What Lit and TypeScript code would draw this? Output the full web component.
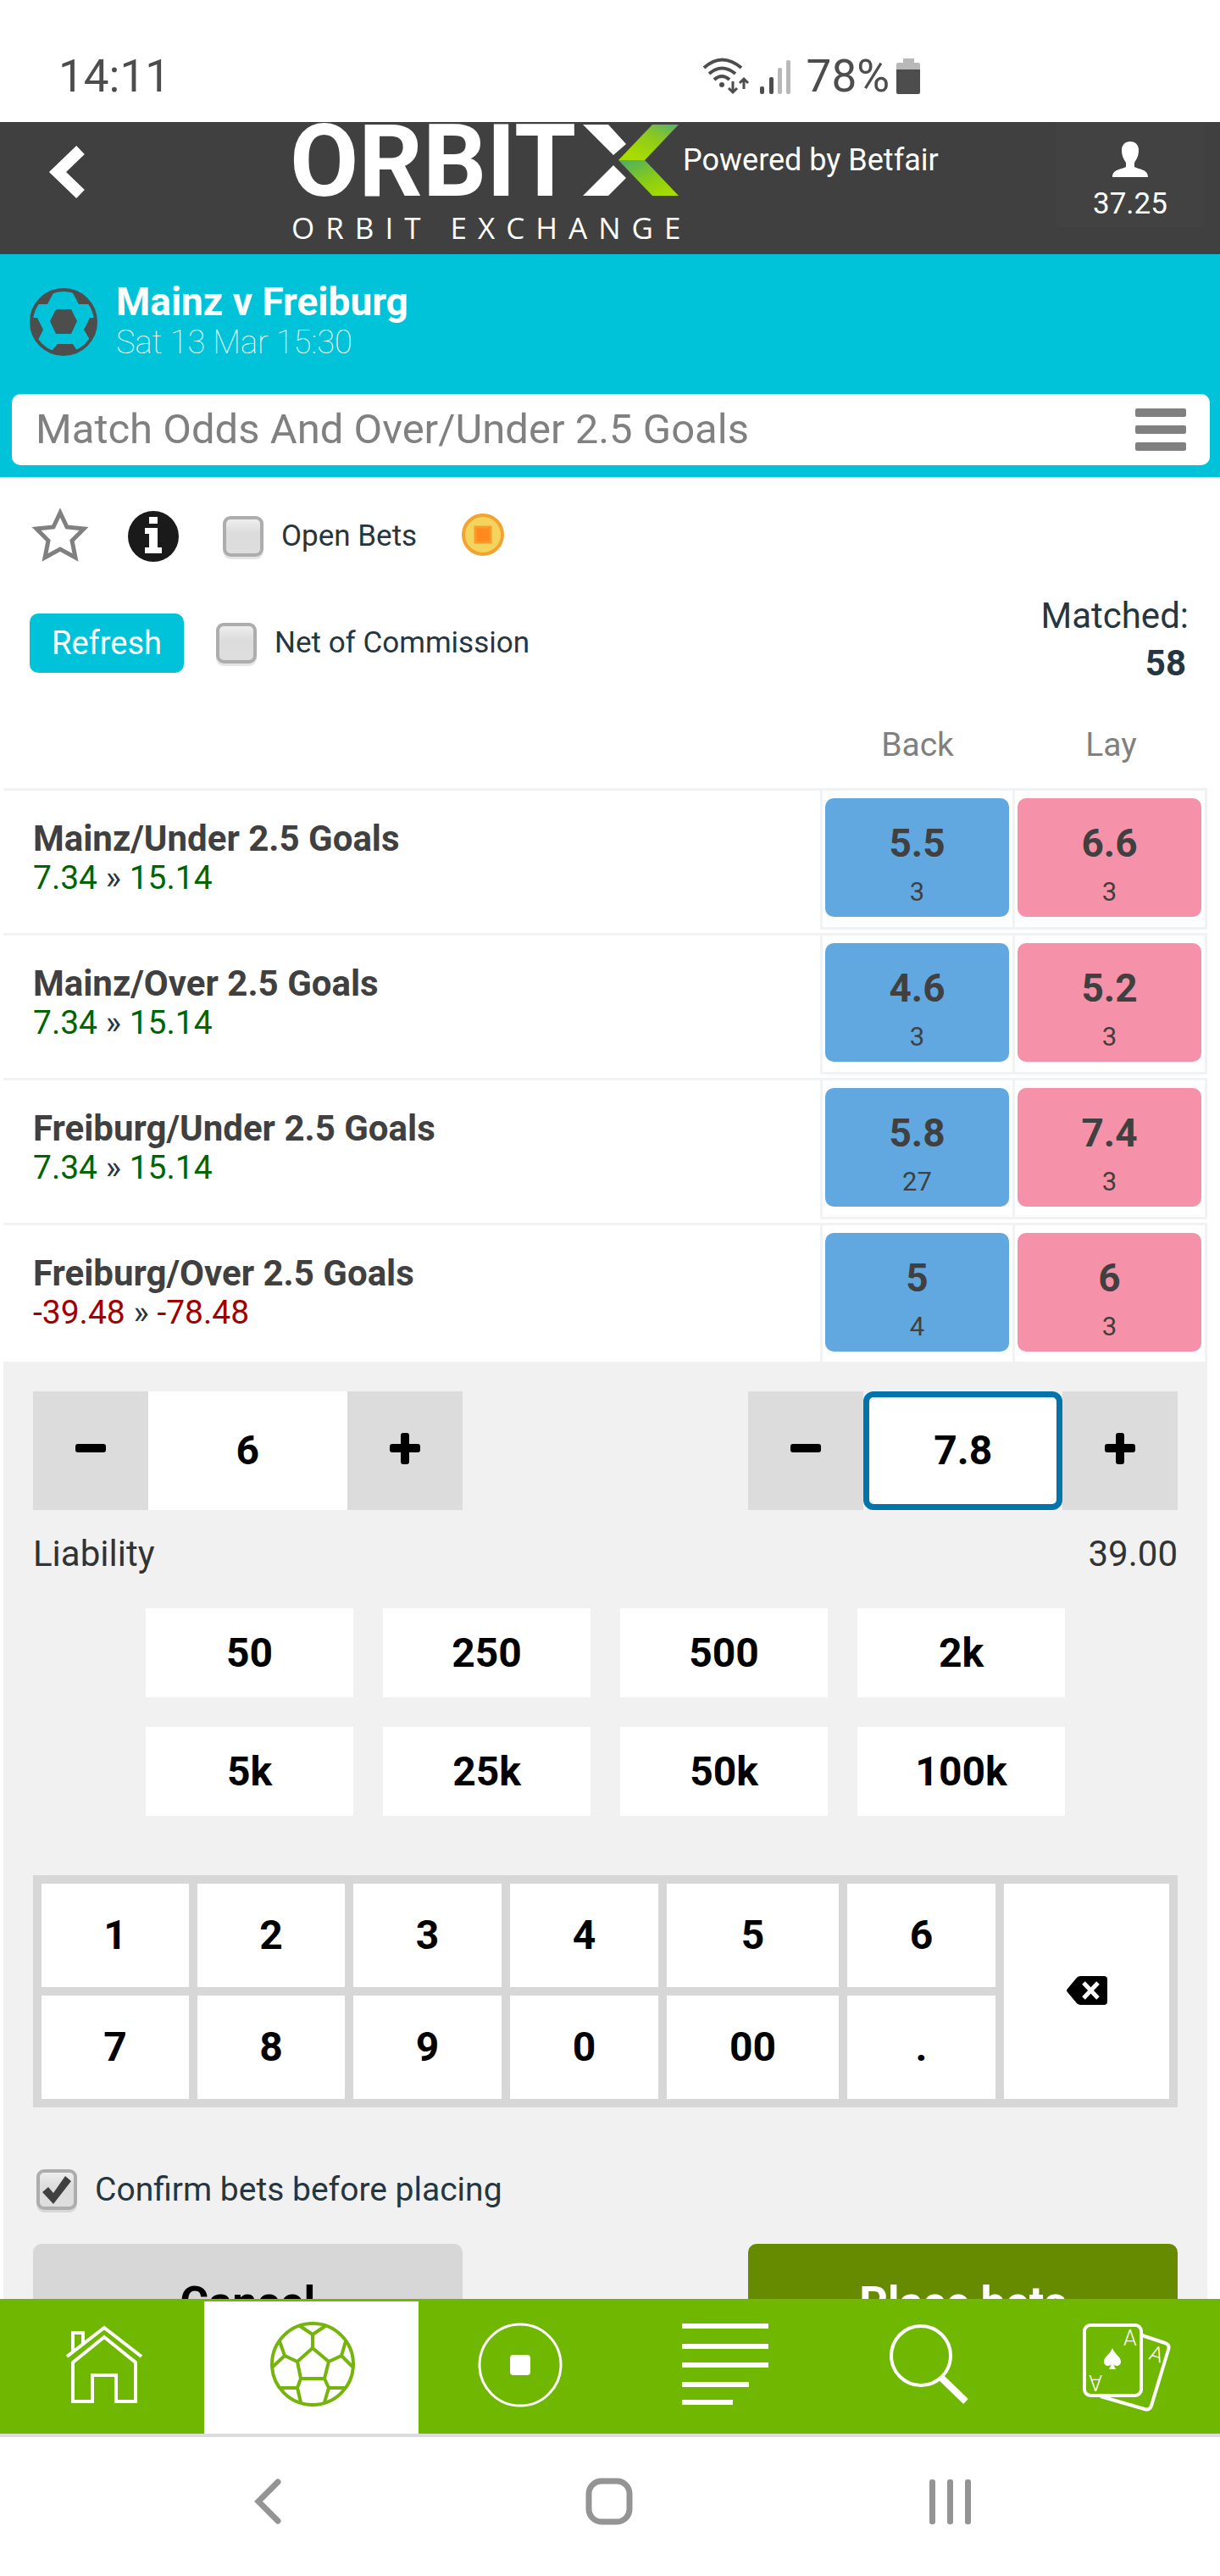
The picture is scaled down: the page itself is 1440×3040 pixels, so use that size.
import { LitElement, html, css, svg } from "lit";
import { customElement, state } from "lit/decorators.js";
import { classMap } from "lit/directives/class-map.js";

interface Runner {
  name: string;
  now: string;
  after: string;
  back: [string, string];
  lay: [string, string];
}

const RUNNERS: Runner[] = [
  { name: "Mainz/Under 2.5 Goals", now: "7.34", after: "15.14", back: ["5.5", "3"], lay: ["6.6", "3"] },
  { name: "Mainz/Over 2.5 Goals", now: "7.34", after: "15.14", back: ["4.6", "3"], lay: ["5.2", "3"] },
  { name: "Freiburg/Under 2.5 Goals", now: "7.34", after: "15.14", back: ["5.8", "27"], lay: ["7.4", "3"] },
  { name: "Freiburg/Over 2.5 Goals", now: "-39.48", after: "-78.48", back: ["5", "4"], lay: ["6", "3"] },
];

const STAKES = ["50", "250", "500", "2k", "5k", "25k", "50k", "100k"];
const KEYS_TOP = ["1", "2", "3", "4", "5", "6"];
const KEYS_BOTTOM = ["7", "8", "9", "0", "00", "."];

/* ---------- status bar ---------- */

@customElement("status-bar")
export class StatusBar extends LitElement {
  static styles = css`
    :host {
      display: flex;
      justify-content: space-between;
      align-items: flex-end;
      box-sizing: border-box;
      height: 144px;
      padding: 0 354px 24px 69px;
      background: #fff;
      color: #4d4d4d;
      font-size: 53px;
      line-height: 60px;
    }
    .icons {
      display: flex;
      align-items: center;
    }
    svg {
      display: block;
    }
    .signal {
      margin: 0 19px 0 10px;
    }
    .battery {
      margin-left: 8px;
    }
  `;

  render() {
    return html`
      <span>14:11</span>
      <div class="icons">
        <svg width="58" height="44" viewBox="0 0 58 44" fill="none" stroke="#4d4d4d" stroke-width="4">
          <path d="M2 12Q23 -7 46 12M8 19Q23 6 39 19M14 26Q23 18 32 26" />
          <circle cx="23" cy="32" r="3" fill="#4d4d4d" stroke="none" />
          <path d="M36 28V40M31 36l5 5 5-5M49 37V25M44 30l5-5 5 5" stroke-width="3" />
        </svg>
        <svg class="signal" width="36" height="44" viewBox="0 0 36 44">
          <g fill="#4d4d4d">
            <rect x="0" y="34" width="5" height="9" rx="2" />
            <rect x="11" y="23" width="5" height="20" rx="2" />
          </g>
          <g fill="#b8b8b8">
            <rect x="21" y="12" width="5" height="31" rx="2" />
            <rect x="31" y="3" width="5" height="40" rx="2" />
          </g>
        </svg>
        <span>78%</span>
        <svg class="battery" width="28" height="44" viewBox="0 0 28 44">
          <path d="M8 1H21V6H26Q28 6 28 8V16H0V8Q0 6 2 6H8Z" fill="#b8b8b8" />
          <path d="M0 14H28V41Q28 43 26 43H2Q0 43 0 41Z" fill="#4d4d4d" />
        </svg>
      </div>
    `;
  }
}

/* ---------- brand header ---------- */

@customElement("brand-header")
export class BrandHeader extends LitElement {
  static styles = css`
    :host {
      display: grid;
      grid-template-columns: 340px 1fr 174px;
      box-sizing: border-box;
      height: 156px;
      padding-right: 19px;
      background: #404040;
      border-bottom: 1px solid #20505c;
      color: #fff;
    }
    svg {
      display: block;
    }
    .back {
      justify-self: start;
      padding: 27px 40px 0 57px;
    }
    .account {
      display: flex;
      flex-direction: column;
      align-items: center;
      height: 124px;
      background: #424242;
      color: #fff;
      font-size: 35px;
      line-height: 42px;
      text-decoration: none;
    }
    .account svg {
      margin: 22px 0 11px;
    }
    .wordmark {
      font-size: 118px;
      font-weight: 700;
    }
    .tagline {
      font-family: "Open Sans", sans-serif;
      font-size: 35px;
      letter-spacing: 13px;
    }
    .partner {
      font-size: 36px;
    }
  `;

  render() {
    return html`
      <a class="back" href="#back" aria-label="Back">
        <svg width="43" height="64" viewBox="0 0 43 64" fill="none" stroke="#fff" stroke-width="14" stroke-linejoin="round">
          <path d="M38 6L11 32L38 58" stroke-linejoin="miter" />
        </svg>
      </a>
      <svg width="780" height="154" viewBox="0 0 780 154" fill="#fff">
        <defs>
          <linearGradient id="leaf" x1="1" y1="0" x2="0.3" y2="0.9">
            <stop offset="0" stop-color="#55b070" />
            <stop offset="0.45" stop-color="#8cc820" />
            <stop offset="1" stop-color="#a8dc00" />
          </linearGradient>
          <linearGradient id="leaf2" x1="0.1" y1="0" x2="0.8" y2="1">
            <stop offset="0" stop-color="#4fae62" />
            <stop offset="0.55" stop-color="#88cc18" />
            <stop offset="1" stop-color="#a8dc00" />
          </linearGradient>
        </defs>
        <text class="wordmark" x="2" y="87">ORBIT</text>
        <path d="M348 3H378L399 26L384 39ZM348 87L384 51L399 66L378 87Z" />
        <path d="M430 3H461L421 45H390Z" fill="url(#leaf)" />
        <path d="M390 45H421L461 87H430Z" fill="url(#leaf2)" />
        <text class="tagline" x="4" y="138">ORBIT EXCHANGE</text>
        <text class="partner" x="466" y="57">Powered by Betfair</text>
      </svg>
      <a class="account" href="#account">
        <svg width="44" height="43" viewBox="0 0 44 43" fill="#fff">
          <path d="M22 1C28 1 32 5 32 11C32 18 30 21 27 26V31C33 34 43 34 43 43H1C1 34 11 34 17 31V26C14 21 12 18 12 11C12 5 16 1 22 1Z" />
        </svg>
        37.25
      </a>
    `;
  }
}

/* ---------- event header ---------- */

@customElement("event-header")
export class EventHeader extends LitElement {
  static styles = css`
    :host {
      display: block;
      padding: 32px 12px 14px 14px;
      background: #00c3d9;
      color: #fff;
    }
    .event {
      display: flex;
      align-items: center;
      gap: 22px;
      padding-left: 21px;
    }
    h1,
    p {
      margin: 0;
      line-height: 48px;
    }
    h1 {
      font-size: 46px;
      font-weight: 700;
    }
    p {
      font-size: 38px;
      font-weight: 100;
    }
    .market {
      display: flex;
      justify-content: space-between;
      align-items: center;
      width: 100%;
      height: 84px;
      margin-top: 37px;
      padding: 0 28px 0 28px;
      border: 0;
      border-radius: 10px;
      background: #fff;
      color: #808080;
      font: 400 49px/60px Roboto, sans-serif;
    }
  `;

  render() {
    return html`
      <div class="event">
        <svg width="80" height="80" viewBox="0 0 80 80" fill="#4d4d4d">
          <circle cx="40" cy="40" r="38" fill="none" stroke="#4d4d4d" stroke-width="4" />
          <path d="M31 25H49L56 39L49 54H31L24 39Z" />
          <path d="M29 4L21 19H10Q16 8 29 4ZM50 4L58 19H70Q64 8 50 4Z" />
          <path d="M3 35H9L16 49L10 61Q3 50 3 35ZM77 35H71L64 49L71 61Q77 50 77 35Z" />
          <path d="M33 66H51L56 74Q40 80 26 74Z" />
        </svg>
        <div>
          <h1>Mainz v Freiburg</h1>
          <p>Sat 13 Mar 15:30</p>
        </div>
      </div>
      <button class="market">
        <span>Match Odds And Over/Under 2.5 Goals</span>
        <svg width="60" height="50" viewBox="0 0 60 50" fill="#808080">
          <rect width="60" height="10" rx="2" />
          <rect y="20" width="60" height="10" rx="2" />
          <rect y="40" width="60" height="10" rx="2" />
        </svg>
      </button>
    `;
  }
}

/* ---------- check box with label ---------- */

@customElement("check-field")
export class CheckField extends LitElement {
  static properties = {
    label: { type: String },
    checked: { type: Boolean },
    large: { type: Boolean },
  };
  declare label: string;
  declare checked: boolean;
  declare large: boolean;

  static styles = css`
    :host {
      display: flex;
      align-items: center;
    }
    label {
      padding-left: 21px;
      color: #263640;
      font-size: 35px;
      line-height: 48px;
    }
    .large {
      font-size: 39px;
    }
    .box {
      appearance: none;
      position: relative;
      box-sizing: border-box;
      width: 48px;
      height: 48px;
      margin: 0;
      border: 4px solid #adadad;
      border-radius: 9px;
      background: linear-gradient(#eeeeee, #dcdcdc 40%, #dedede);
      box-shadow: 0 3px 0 rgba(0, 0, 0, 0.1);
    }
    .box:checked::after {
      content: "";
      position: absolute;
      inset: -4px;
      background: #404040;
      clip-path: polygon(7px 27px, 14px 21px, 20px 28px, 34px 8px, 41px 14px, 20px 41px);
    }
  `;

  render() {
    return html`
      <input class="box" id="box" type="checkbox" .checked=${this.checked ?? false} />
      <label for="box" class=${classMap({ large: this.large })}>${this.label}</label>
    `;
  }
}

/* ---------- market tools ---------- */

@customElement("market-tools")
export class MarketTools extends LitElement {
  static styles = css`
    :host {
      display: block;
      padding: 36px 37px 14px 35px;
    }
    .row {
      display: flex;
      align-items: center;
      justify-content: space-between;
    }
    .icons,
    .left {
      display: flex;
      align-items: center;
    }
    .icons {
      gap: 52px;
      height: 68px;
      padding-left: 4px;
      margin-bottom: 32px;
    }
    .left {
      gap: 38px;
      padding-top: 8px;
    }
    svg {
      display: block;
      overflow: visible;
    }
    .icon {
      padding: 0;
      border: 0;
      background: none;
    }
    .refresh {
      height: 70px;
      padding: 0 26px;
      border: 0;
      border-radius: 10px;
      background: #00c3d9;
      color: #fff;
      font: 400 38px/48px Roboto, sans-serif;
    }
    .matched {
      color: #263640;
      font-size: 42px;
      line-height: 56px;
      text-align: right;
    }
    .matched strong {
      display: block;
      padding-right: 3px;
    }
  `;

  render() {
    return html`
      <div class="icons">
        <button class="icon" aria-label="Favourite">
          <svg width="60" height="68" viewBox="0 0 60 68" fill="none" stroke="#808080" stroke-width="5">
            <path d="M32 6L40 23L60 25L46 39L50 59L32 49L14 59L18 39L4 25L24 23Z" />
          </svg>
        </button>
        <button class="icon" aria-label="Market information">
          <svg width="60" height="60" viewBox="0 0 60 60">
            <circle cx="30" cy="30" r="30" fill="#1a1a1a" />
            <path d="M25 7H35V15H25ZM20 20H35V43H40V50H20V43H25V27H20Z" fill="#fff" />
          </svg>
        </button>
        <check-field label="Open Bets"></check-field>
        <svg width="50" height="54" viewBox="0 0 50 54">
          <circle cx="26" cy="25" r="23" fill="#f3d45e" stroke="#f3a32f" stroke-width="4" />
          <rect x="17" y="16" width="18" height="18" fill="#ff8820" stroke="#fb9c28" stroke-width="3" />
        </svg>
      </div>
      <div class="row">
        <div class="left">
          <button class="refresh">Refresh</button>
          <check-field label="Net of Commission"></check-field>
        </div>
        <div class="matched">Matched: <strong>58</strong></div>
      </div>
    `;
  }
}

/* ---------- runners and prices ---------- */

@customElement("runner-table")
export class RunnerTable extends LitElement {
  static styles = css`
    :host {
      display: block;
      margin: 0 15px -7px 4px;
    }
    table {
      width: 100%;
      border-spacing: 0 4px;
    }
    th,
    td {
      box-sizing: border-box;
      padding: 0;
      font-weight: 400;
    }
    thead th {
      height: 97px;
      padding: 2px 0 0 3px;
      color: #808080;
      font-size: 39px;
    }
    .runner {
      padding: 33px 0 0 35px;
      border-top: 3px solid #f0f2f3;
      color: #404040;
      font-size: 42px;
      font-weight: 700;
      line-height: 47px;
      text-align: left;
      vertical-align: top;
    }
    .result {
      color: #263640;
      font-size: 39px;
      font-weight: 400;
    }
    .up {
      color: #006400;
    }
    .down {
      color: #a00000;
    }
    .cell {
      width: 227px;
      height: 167px;
      padding: 9px 4px 12px 3px;
      border: 3px solid #f0f2f3;
      border-right-width: 0;
    }
    .cell:last-child {
      width: 230px;
      border-right-width: 3px;
    }
    .price {
      display: block;
      width: 100%;
      height: 140px;
      padding: 24px 0 0;
      border: 0;
      border-radius: 10px;
      color: #404040;
      font: 400 31px/58px Roboto, sans-serif;
    }
    .price strong {
      display: block;
      font-size: 46px;
      font-weight: 700;
    }
    .back {
      background: #61a8e0;
    }
    .lay {
      background: #f592a9;
    }
  `;

  private price(kind: string, [odds, size]: [string, string]) {
    return html`<td class="cell"><button class="price ${kind}"><strong>${odds}</strong>${size}</button></td>`;
  }

  private sign(value: string) {
    return value.startsWith("-") ? "down" : "up";
  }

  render() {
    return html`
      <table>
        <thead>
          <tr>
            <th aria-label="Selection"></th>
            <th scope="col">Back</th>
            <th scope="col">Lay</th>
          </tr>
        </thead>
        <tbody>
          ${RUNNERS.map(
            (r) => html`
              <tr>
                <th class="runner" scope="row">
                  ${r.name}
                  <div class="result"><span class=${this.sign(r.now)}>${r.now}</span> » <span class=${this.sign(r.after)}>${r.after}</span></div>
                </th>
                ${this.price("back", r.back)} ${this.price("lay", r.lay)}
              </tr>
            `
          )}
        </tbody>
      </table>
    `;
  }
}

/* ---------- bet form ---------- */

@customElement("bet-form")
export class BetForm extends LitElement {
  @state() private odds = "6";
  @state() private stake = "7.8";

  static styles = css`
    :host {
      display: block;
      margin: 0 15px 0 4px;
      padding: 35px;
      background: #f1f1f1;
    }
    button,
    input {
      box-sizing: border-box;
      margin: 0;
      padding: 0;
      border: 0;
      border-radius: 0;
      background: #fff;
      color: #000;
      font: 700 48px/60px Roboto, sans-serif;
      text-align: center;
    }
    svg {
      display: block;
      margin: 0 auto;
    }
    .pair {
      display: grid;
      grid-template-columns: 3fr 3fr;
      column-gap: 25%;
    }
    .stepper {
      display: grid;
      grid-template-columns: 136fr 235fr 136fr;
      height: 140px;
    }
    .stepper button {
      background: #dcdcdc;
    }
    .stepper input {
      width: 100%;
      min-width: 0;
    }
    .stepper .active {
      border: 7px solid #0273ab;
      border-radius: 12px;
    }
    .liability {
      display: flex;
      justify-content: space-between;
      margin: 26px 0 38px;
      color: #333;
      font-size: 42px;
      line-height: 52px;
    }
    .stakes {
      display: grid;
      grid-template-columns: repeat(4, 1fr);
      grid-auto-rows: 105px;
      gap: 35px;
      margin: 0 133px 70px;
    }
    .keypad {
      display: grid;
      grid-template-columns: 174fr 174fr 175fr 175fr 203fr 175fr 195fr;
      grid-auto-rows: 122px;
      gap: 10px;
      margin-bottom: 73px;
      padding: 10px;
      background: #d7d7d7;
    }
    .delete {
      grid-row: 1 / span 2;
      grid-column: 7;
    }
    .confirm {
      padding-left: 4px;
      margin-bottom: 40px;
    }
    .actions button {
      height: 140px;
      border-radius: 10px;
      font-size: 52px;
    }
    .actions .cancel {
      background: #d7d7d7;
    }
    .actions .place {
      background: #668a00;
      color: #fff;
    }
  `;

  private stepper(label: string, value: string, active: boolean) {
    return html`
      <div class="stepper">
        <button aria-label="Decrease ${label}">
          <svg width="36" height="42" viewBox="0 0 36 42"><rect y="13" width="36" height="10" rx="3" /></svg>
        </button>
        <input class=${classMap({ active })} type="text" aria-label=${label} .value=${value} />
        <button aria-label="Increase ${label}">
          <svg width="36" height="42" viewBox="0 0 36 42">
            <rect y="13" width="36" height="10" rx="3" />
            <rect x="13" width="10" height="37" rx="3" />
          </svg>
        </button>
      </div>
    `;
  }

  render() {
    return html`
      <div class="pair">
        ${this.stepper("Odds", this.odds, false)} ${this.stepper("Stake", this.stake, true)}
      </div>
      <div class="liability"><span>Liability</span><span>39.00</span></div>
      <div class="stakes">${STAKES.map((s) => html`<button>${s}</button>`)}</div>
      <div class="keypad">
        ${KEYS_TOP.map((k) => html`<button>${k}</button>`)}
        <button class="delete" aria-label="Delete">
          <svg width="48" height="36" viewBox="0 0 48 36">
            <path d="M16 0H44Q48 0 48 4V30Q48 34 44 34H16Q13 34 11 31L1 19Q-1 17 1 15L11 3Q13 0 16 0Z" />
            <path d="M20 8L37 26M37 8L20 26" stroke="#fff" stroke-width="5" />
          </svg>
        </button>
        ${KEYS_BOTTOM.map((k) => html`<button>${k}</button>`)}
      </div>
      <check-field class="confirm" label="Confirm bets before placing" checked large></check-field>
      <div class="pair actions">
        <button class="cancel">Cancel</button>
        <button class="place">Place bets</button>
      </div>
    `;
  }
}

/* ---------- site navigation ---------- */

const NAV = [
  {
    name: "Home",
    icon: svg`<path d="M8 41L52 7L96 41" /><path d="M15 35V13H27V27M15 48L52 18L89 48V94H66V63H38V94H15Z" />`,
  },
  {
    name: "Football",
    active: true,
    icon: svg`<g transform="translate(1 0)"><circle cx="50" cy="50" r="48" />
      <path d="M35 5L50 15L65 5M50 15V31L69 47L64 67H36L32 47L50 31M32 47L17 40L11 23M17 40L3 53M69 47L84 40L89 23M84 40L97 53M36 67L32 78H11M32 78L36 95M64 67L69 78H89M69 78L64 95" /></g>`,
  },
  {
    name: "In play",
    icon: svg`<circle cx="50" cy="51" r="48" stroke-width="3" /><rect x="38" y="39" width="24" height="24" rx="4" fill="#fff" stroke="none" />`,
  },
  {
    name: "My bets",
    icon: svg`<path d="M-1 5H101M-1 29H101M-1 51H101M-1 74H78M-1 95H59" stroke-width="6" />`,
  },
  {
    name: "Search",
    icon: svg`<circle cx="41" cy="40" r="35" /><path d="M65 66L94 94" stroke-width="8" />`,
  },
  {
    name: "Casino",
    icon: svg`<g transform="translate(3 0)"><rect x="0" y="4" width="67" height="83" rx="7" />
      <path d="M68 16L95 25Q101 27 99 33L79 99Q77 105 71 103L19 88" />
      <path d="M33 31C36 39 43 41 43 47C43 53 36 53 34 50L37 56H29L32 50C30 53 23 53 23 47C23 41 30 39 33 31Z" fill="#fff" stroke="none" />
      <g fill="#fff" stroke="none" class="pip">
        <text x="46" y="28">A</text>
        <text transform="translate(21 63) rotate(180)">A</text>
        <text transform="translate(75 44) rotate(17)">A</text>
      </g></g>`,
  },
];

@customElement("site-nav")
export class SiteNav extends LitElement {
  static styles = css`
    :host {
      display: grid;
      grid-template-columns: 241fr 253fr 240fr 244fr 235fr 227fr;
      box-sizing: border-box;
      height: 163px;
      padding-top: 3px;
      background: #6fb700;
      border-bottom: 4px solid #dcdcde;
    }
    .item {
      display: flex;
      justify-content: center;
      padding-top: 24px;
      color: #fff;
    }
    .active {
      background: #fff;
      color: #74b40c;
    }
    svg {
      overflow: visible;
    }
    .pip {
      font-size: 25px;
      font-weight: 300;
    }
  `;

  render() {
    return NAV.map(
      (n) => html`
        <a class=${classMap({ item: true, active: !!n.active })} href="#nav" aria-label=${n.name}>
          <svg width="100" height="104" viewBox="0 0 100 104" fill="none" stroke="currentColor" stroke-width="4">${n.icon}</svg>
        </a>
      `
    );
  }
}

/* ---------- device navigation ---------- */

@customElement("device-nav")
export class DeviceNav extends LitElement {
  static styles = css`
    :host {
      display: grid;
      grid-template-columns: repeat(3, 28%);
      justify-content: center;
      justify-items: center;
      align-items: center;
      box-sizing: border-box;
      height: 164px;
      padding: 0 2px 12px 0;
      background: #fff;
    }
    button {
      padding: 0;
      border: 0;
      background: none;
    }
    svg {
      display: block;
    }
  `;

  render() {
    return html`
      <button aria-label="Back">
        <svg width="32" height="56" viewBox="0 0 32 56" fill="none" stroke="#949494" stroke-width="7" stroke-linecap="round">
          <path d="M28 5L5 28L28 51" />
        </svg>
      </button>
      <button aria-label="Home">
        <svg width="56" height="56" viewBox="0 0 56 56" fill="none" stroke="#949494" stroke-width="7">
          <rect x="4" y="4" width="48" height="48" rx="15" />
        </svg>
      </button>
      <button aria-label="Recent apps">
        <svg width="50" height="56" viewBox="0 0 50 56" fill="#949494">
          <rect y="2" width="7" height="53" rx="3" />
          <rect x="21" y="2" width="7" height="53" rx="3" />
          <rect x="42" y="2" width="7" height="53" rx="3" />
        </svg>
      </button>
    `;
  }
}

/* ---------- page ---------- */

@customElement("app-root")
export class AppRoot extends LitElement {
  static styles = css`
    :host {
      display: flex;
      flex-direction: column;
      height: 100vh;
      background: #fff;
      font-family: Roboto, sans-serif;
    }
    .page {
      flex: 1;
      min-height: 0;
      overflow-y: auto;
      scrollbar-width: none;
    }
  `;

  render() {
    return html`
      <status-bar></status-bar>
      <brand-header></brand-header>
      <main class="page">
        <event-header></event-header>
        <market-tools></market-tools>
        <runner-table></runner-table>
        <bet-form></bet-form>
      </main>
      <site-nav></site-nav>
      <device-nav></device-nav>
    `;
  }
}
